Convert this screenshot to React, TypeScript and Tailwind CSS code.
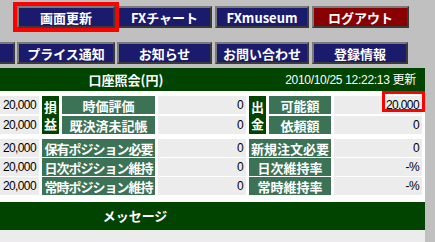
const JP = "font-['Noto_Sans_CJK_JP','Liberation_Sans',sans-serif]";

const NAV_TOP = [
  { label: "画面更新", w: "w-[98px]", bg: "bg-[#1b1b6e]" },
  { label: "FXチャート", w: "w-[95px]", bg: "bg-[#1b1b6e]" },
  { label: "FXmuseum", w: "w-[94px]", bg: "bg-[#1b1b6e]" },
  { label: "ログアウト", w: "w-[97px]", bg: "bg-[#880000]" },
];

const NAV_BOTTOM = [
  { label: "プライス通知", w: "w-[98px]" },
  { label: "お知らせ", w: "w-[95px]" },
  { label: "お問い合わせ", w: "w-[94px]" },
  { label: "登録情報", w: "w-[96px]" },
];

function NavButton({ label, w, bg = "bg-[#1b1b6e]" }: { label: string; w: string; bg?: string }) {
  return (
    <div
      className={`${w} ${bg} h-[22px] flex items-center justify-center border-2 border-t-[#7a7a7a] border-l-[#7a7a7a] border-r-[#3a3a3a] border-b-[#3a3a3a] text-white text-[13px] font-bold leading-none whitespace-nowrap`}
    >
      {label}
    </div>
  );
}

const LABEL = "bg-[#3c7256] text-white text-[13px] font-bold leading-none flex items-center justify-center whitespace-nowrap";
const CELL = "bg-[#ececec] text-black text-[12px] leading-none flex items-center justify-end pr-[3px] font-['Liberation_Sans',sans-serif] tracking-[-0.6px]";
const SIDE = "bg-[#004400] text-white text-[13px] font-bold leading-[17px] flex items-center justify-center row-span-2";

const LOWER = [
  { a: "20,000", l: "保有ポジション必要", b: "0", r: "新規注文必要", c: "0" },
  { a: "20,000", l: "日次ポジション維持", b: "0", r: "日次維持率", c: "-%" },
  { a: "20,000", l: "常時ポジション維持", b: "0", r: "常時維持率", c: "-%" },
];

export default function App() {
  return (
    <div className={`relative w-[435px] h-[242px] bg-[#c0c0c0] overflow-hidden ${JP}`}>
      {/* Top navigation */}
      <div className="pt-[6px] flex flex-col gap-[14px]">
        <div className="flex pl-[17px] gap-[2px]">
          {NAV_TOP.map((b, i) => (
            <div key={b.label} className={i > 1 ? "ml-[1px]" : ""}>
              <NavButton {...b} />
            </div>
          ))}
        </div>
        <div className="flex gap-[2px]">
          <div className="w-[15px] h-[22px] bg-[#1b1b6e] border-2 border-l-0 border-t-[#7a7a7a] border-r-[#3a3a3a] border-b-[#3a3a3a]" />
          {NAV_BOTTOM.map((b, i) => (
            <div key={b.label} className={i > 1 ? "ml-[1px]" : ""}>
              <NavButton {...b} />
            </div>
          ))}
        </div>
      </div>

      {/* Account panel */}
      <div className="mt-[4px] w-[425px] bg-white">
        <div className="h-[23px] bg-[#004400] text-white flex items-center">
          <div className="w-[252px] text-center text-[13px] font-bold">口座照会(円)</div>
          <div className="flex-1 text-right pr-[9px] text-[12px] font-['Liberation_Sans','Noto_Sans_CJK_JP',sans-serif] tracking-[-0.3px]">
            2010/10/25 12:22:13 <span className={JP}>更新</span>
          </div>
        </div>

        <div className="pt-[5px] grid grid-cols-[39px_17px_93px_88px_17px_62px_88px] gap-x-[3px] gap-y-[2px] auto-rows-[18px]">
          <div className={CELL}>20,000</div>
          <div className={SIDE}>
            <span className="w-[13px] break-all text-center">損益</span>
          </div>
          <div className={LABEL}>時価評価</div>
          <div className={CELL}>0</div>
          <div className={SIDE}>
            <span className="w-[13px] break-all text-center">出金</span>
          </div>
          <div className={LABEL}>可能額</div>
          <div className={CELL}>20,000</div>

          <div className={CELL}>20,000</div>
          <div className={LABEL}>既決済未記帳</div>
          <div className={CELL}>0</div>
          <div className={LABEL}>依頼額</div>
          <div className={CELL}>0</div>
        </div>

        <div className="mt-[5px] grid grid-cols-[39px_17px_93px_88px_17px_62px_88px] gap-x-[3px] gap-y-[1px] auto-rows-[18px]">
          {LOWER.map((r) => (
            <div key={r.l} className="contents">
              <div className={CELL}>{r.a}</div>
              <div className={`${LABEL} col-span-2 tracking-[-1px]`}>{r.l}</div>
              <div className={CELL}>{r.b}</div>
              <div className={`${LABEL} col-span-2`}>{r.r}</div>
              <div className={CELL}>{r.c}</div>
            </div>
          ))}
        </div>

        <div className="mt-[7px] h-[28px] bg-[#004400] flex items-center">
          <div className="w-[270px] text-center text-white text-[13px] font-bold">メッセージ</div>
        </div>
        <div className="h-[12px] bg-[#ececec]" />
      </div>

      {/* Annotation boxes */}
      <div className="absolute left-[13px] top-[2px] w-[106px] h-[30px] border-4 border-[#ff0000]" />
      <div className="absolute left-[382px] top-[91px] w-[43px] h-[21px] border-[3px] border-[#ff0000]" />
    </div>
  );
}
